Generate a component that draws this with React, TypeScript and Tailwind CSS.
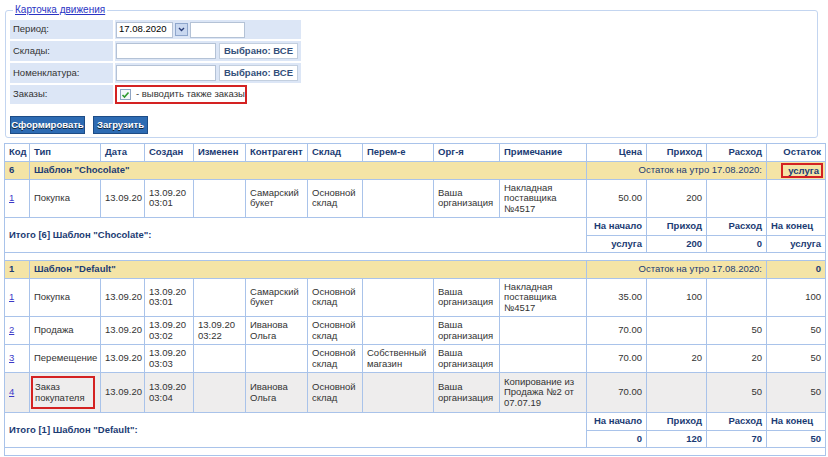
import React from "react";

type Row = {
  code: string;
  type: string[];
  date: string;
  created: string[];
  changed: string[];
  kontr: string[];
  sklad: string[];
  perem: string[];
  org: string[];
  note: string[];
  price: string;
  inc: string;
  out: string;
  rest: string;
  grey?: boolean;
  mark?: boolean;
};

type Section = {
  code: string;
  name: string;
  rest: string;
  restMark?: boolean;
  rows: Row[];
  total: string[];
};

const sections: Section[] = [
  {
    code: "6",
    name: 'Шаблон "Chocolate"',
    rest: "услуга",
    restMark: true,
    rows: [
      {
        code: "1",
        type: ["Покупка"],
        date: "13.09.20",
        created: ["13.09.20", "03:01"],
        changed: [],
        kontr: ["Самарский", "букет"],
        sklad: ["Основной", "склад"],
        perem: [],
        org: ["Ваша", "организация"],
        note: ["Накладная", "поставщика", "№4517"],
        price: "50.00",
        inc: "200",
        out: "",
        rest: "",
      },
    ],
    total: ["услуга", "200", "0", "услуга"],
  },
  {
    code: "1",
    name: 'Шаблон "Default"',
    rest: "0",
    rows: [
      {
        code: "1",
        type: ["Покупка"],
        date: "13.09.20",
        created: ["13.09.20", "03:01"],
        changed: [],
        kontr: ["Самарский", "букет"],
        sklad: ["Основной", "склад"],
        perem: [],
        org: ["Ваша", "организация"],
        note: ["Накладная", "поставщика", "№4517"],
        price: "35.00",
        inc: "100",
        out: "",
        rest: "100",
      },
      {
        code: "2",
        type: ["Продажа"],
        date: "13.09.20",
        created: ["13.09.20", "03:02"],
        changed: ["13.09.20", "03:22"],
        kontr: ["Иванова", "Ольга"],
        sklad: ["Основной", "склад"],
        perem: [],
        org: ["Ваша", "организация"],
        note: [],
        price: "70.00",
        inc: "",
        out: "50",
        rest: "50",
      },
      {
        code: "3",
        type: ["Перемещение"],
        date: "13.09.20",
        created: ["13.09.20", "03:03"],
        changed: [],
        kontr: [],
        sklad: ["Основной", "склад"],
        perem: ["Собственный", "магазин"],
        org: ["Ваша", "организация"],
        note: [],
        price: "70.00",
        inc: "20",
        out: "20",
        rest: "50",
      },
      {
        code: "4",
        type: ["Заказ", "покупателя"],
        date: "13.09.20",
        created: ["13.09.20", "03:04"],
        changed: [],
        kontr: ["Иванова", "Ольга"],
        sklad: ["Основной", "склад"],
        perem: [],
        org: ["Ваша", "организация"],
        note: ["Копирование из", "Продажа №2 от", "07.07.19"],
        price: "70.00",
        inc: "",
        out: "50",
        rest: "50",
        grey: true,
        mark: true,
      },
    ],
    total: ["0", "120", "70", "50"],
  },
];

// cell base classes
const td = "border border-[#a9c3ea] px-[4px] py-[3px] align-middle";
const th = "border border-[#a9c3ea] px-[4px] py-[3px] align-middle font-bold text-[#1b3b73]";

function Lines({ lines }: { lines: string[] }) {
  return (
    <>
      {lines.map((l, i) => (
        <React.Fragment key={i}>
          {i > 0 && <br />}
          {l}
        </React.Fragment>
      ))}
    </>
  );
}

function FormLabel({ children }: { children: React.ReactNode }) {
  return <div className="bg-[#dce6f6] pl-[3px] flex items-center text-[#333]">{children}</div>;
}

function SelectBtn() {
  return (
    <div className="h-[16px] px-[4px] ml-[3px] flex items-center bg-white border border-[#c3cfdf] font-bold text-[#34507a]">
      Выбрано: ВСЕ
    </div>
  );
}

export default function App() {
  return (
    <div className="w-[828px] h-[457px] overflow-hidden bg-white text-[9.5px] leading-[10.5px] font-['Liberation_Sans',Arial,sans-serif]">
      <fieldset className="ml-[5px] mt-[4px] w-[813px] border border-[#c3d5f0] rounded-[3px] pl-[4px] pb-[3px]">
        <legend className="ml-[3px] px-[2px] text-[10px] leading-[12px] text-[#2b35c4] underline">Карточка движения</legend>
        <div className="grid grid-cols-[103px_186px] gap-x-[2px] gap-y-[2px] mt-[4px]">
          <FormLabel>Период:</FormLabel>
          <div className="bg-[#dce6f6] h-[19px] flex items-center pl-[1px]">
            <div className="w-[57px] h-[16px] bg-white border border-[#b4c2d6] pl-[2px] flex items-center text-black">17.08.2020</div>
            <div className="ml-[2px] w-[13px] h-[13px] bg-[#c9d8f0] border border-[#8ea6cc] flex items-center justify-center">
              <svg width="7" height="5" viewBox="0 0 7 5">
                <path d="M1 1 L3.5 3.5 L6 1" stroke="#2a3f7a" strokeWidth="1.4" fill="none" />
              </svg>
            </div>
            <div className="ml-[2px] w-[55px] h-[16px] bg-white border border-[#b4c2d6]" />
          </div>
          <FormLabel>Склады:</FormLabel>
          <div className="bg-[#dce6f6] h-[20px] flex items-center pl-[1px]">
            <div className="w-[100px] h-[16px] bg-white border border-[#b4c2d6]" />
            <SelectBtn />
          </div>
          <FormLabel>Номенклатура:</FormLabel>
          <div className="bg-[#dce6f6] h-[20px] flex items-center pl-[1px]">
            <div className="w-[100px] h-[16px] bg-white border border-[#b4c2d6]" />
            <SelectBtn />
          </div>
          <FormLabel>Заказы:</FormLabel>
          <div className="h-[19px] flex items-center">
            <div className="w-[132px] h-[19px] border-2 border-[#d42222] flex items-center pl-[3px] text-[#333]">
              <div className="w-[11px] h-[11px] border border-[#8fa4c2] bg-[#f4f7fb] flex items-center justify-center">
                <svg width="9" height="8" viewBox="0 0 9 8">
                  <path d="M1.5 4 L3.5 6 L7.5 1.5" stroke="#2f9a2f" strokeWidth="1.6" fill="none" />
                </svg>
              </div>
              <span className="ml-[5px]">- выводить также заказы</span>
            </div>
          </div>
        </div>
        <div className="flex gap-[8px] mt-[12px]">
          <button className="h-[18px] w-[75px] bg-[#2d6bb3] border border-[#1d4c86] text-white font-bold [text-shadow:0_1px_0_#123]">
            Сформировать
          </button>
          <button className="h-[18px] w-[55px] bg-[#2d6bb3] border border-[#1d4c86] text-white font-bold [text-shadow:0_1px_0_#123]">
            Загрузить
          </button>
        </div>
      </fieldset>

      <table className="ml-[4px] mt-[5px] w-[821px] table-fixed border-collapse text-[#333]">
        <colgroup>
          <col className="w-[25px]" />
          <col className="w-[71px]" />
          <col className="w-[44px]" />
          <col className="w-[49px]" />
          <col className="w-[52px]" />
          <col className="w-[62px]" />
          <col className="w-[55px]" />
          <col className="w-[71px]" />
          <col className="w-[66px]" />
          <col className="w-[87px]" />
          <col className="w-[60px]" />
          <col className="w-[60px]" />
          <col className="w-[60px]" />
          <col className="w-[59px]" />
        </colgroup>
        <thead>
          <tr>
            <th className={th + " text-left"}>Код</th>
            <th className={th + " text-left"}>Тип</th>
            <th className={th + " text-left"}>Дата</th>
            <th className={th + " text-left"}>Создан</th>
            <th className={th + " text-left"}>Изменен</th>
            <th className={th + " text-left"}>Контрагент</th>
            <th className={th + " text-left"}>Склад</th>
            <th className={th + " text-left"}>Перем-е</th>
            <th className={th + " text-left"}>Орг-я</th>
            <th className={th + " text-left"}>Примечание</th>
            <th className={th + " text-right"}>Цена</th>
            <th className={th + " text-right"}>Приход</th>
            <th className={th + " text-right"}>Расход</th>
            <th className={th + " text-right"}>Остаток</th>
          </tr>
        </thead>
        <tbody>
          {sections.map((s, si) => (
            <React.Fragment key={si}>
              {si > 0 && (
                <tr>
                  <td colSpan={14} className="h-[8px] border-x border-[#a9c3ea] p-0" />
                </tr>
              )}
              <tr className="bg-[#f4e4a6]">
                <td className={th + " text-left"}>{s.code}</td>
                <td colSpan={9} className={th + " text-left"}>{s.name}</td>
                <td colSpan={3} className={td + " text-right text-[#1b3b73]"}>Остаток на утро 17.08.2020:</td>
                {s.restMark ? (
                  <td className="border border-[#a9c3ea] px-[2px] py-[1px] align-middle font-bold text-[#1b3b73]">
                    <div className="ml-auto w-[42px] h-[15px] border-2 border-[#d42222] text-right pr-[2px] leading-[11px]">
                      {s.rest}
                    </div>
                  </td>
                ) : (
                  <td className={th + " text-right"}>{s.rest}</td>
                )}
              </tr>
              {s.rows.map((r, ri) => (
                <tr key={ri} className={r.grey ? "bg-[#eeeded]" : ""}>
                  <td className={td}>
                    <a className="text-[#3a3ac8] underline">{r.code}</a>
                  </td>
                  {r.mark ? (
                    <td className="border border-[#a9c3ea] pl-[1px] pr-[4px] py-[3px] align-middle">
                      <div className="w-[64px] border-2 border-[#d42222] px-[2px] py-[4px]">
                        <Lines lines={r.type} />
                      </div>
                    </td>
                  ) : (
                    <td className={td}>
                      <Lines lines={r.type} />
                    </td>
                  )}
                  <td className={td}>{r.date}</td>
                  <td className={td}>
                    <Lines lines={r.created} />
                  </td>
                  <td className={td}>
                    <Lines lines={r.changed} />
                  </td>
                  <td className={td}>
                    <Lines lines={r.kontr} />
                  </td>
                  <td className={td}>
                    <Lines lines={r.sklad} />
                  </td>
                  <td className={td}>
                    <Lines lines={r.perem} />
                  </td>
                  <td className={td}>
                    <Lines lines={r.org} />
                  </td>
                  <td className={td}>
                    <Lines lines={r.note} />
                  </td>
                  <td className={td + " text-right"}>{r.price}</td>
                  <td className={td + " text-right"}>{r.inc}</td>
                  <td className={td + " text-right"}>{r.out}</td>
                  <td className={td + " text-right"}>{r.rest}</td>
                </tr>
              ))}
              <tr>
                <td colSpan={10} rowSpan={2} className={th + " text-left"}>
                  Итого [{s.code}] {s.name}:
                </td>
                <td className={th + " text-right"}>На начало</td>
                <td className={th + " text-right"}>Приход</td>
                <td className={th + " text-right"}>Расход</td>
                <td className={th + " text-left"}>На конец</td>
              </tr>
              <tr>
                {s.total.map((v, i) => (
                  <td key={i} className={th + " text-right"}>
                    {v}
                  </td>
                ))}
              </tr>
            </React.Fragment>
          ))}
          <tr>
            <td colSpan={14} className="h-[8px] border border-[#a9c3ea] p-0" />
          </tr>
        </tbody>
      </table>
    </div>
  );
}
